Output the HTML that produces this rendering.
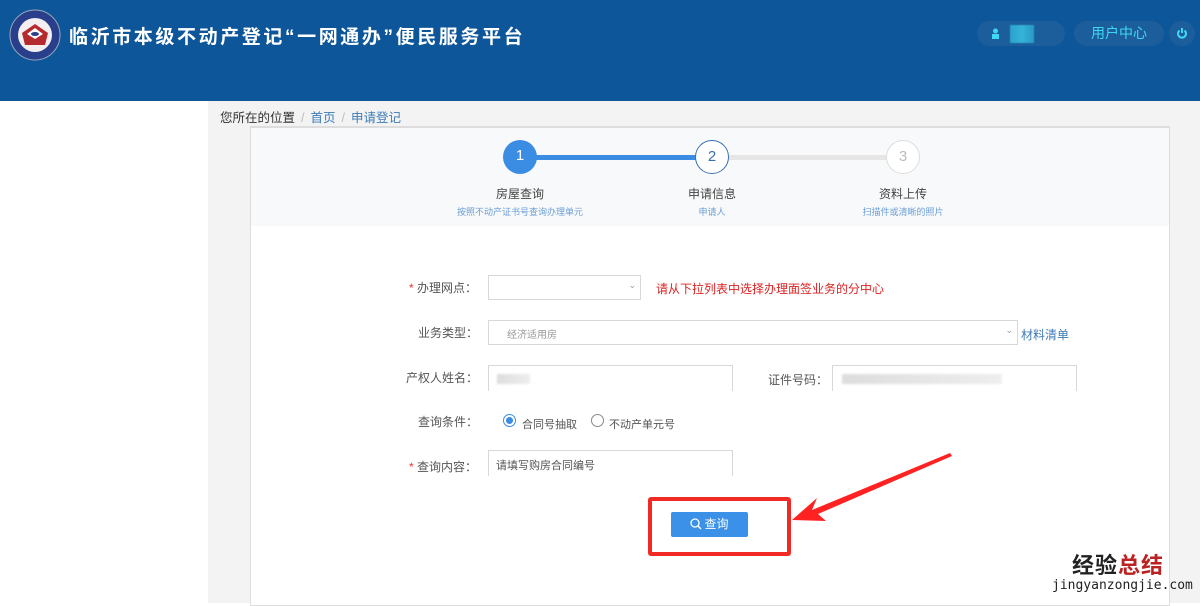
<!DOCTYPE html>
<html><head><meta charset="utf-8"><style>
*{margin:0;padding:0;box-sizing:border-box}
body{width:1200px;height:603px;overflow:hidden;background:#fff;font-family:"Liberation Sans","Noto Sans CJK SC",sans-serif;position:relative;font-size:12px;color:#555}
.hd{position:absolute;left:0;top:0;width:1200px;height:101px;background:#0d5699}
.title{position:absolute;left:69px;top:22px;color:#fff;font-size:19px;font-weight:bold;letter-spacing:2.6px}
.pill{position:absolute;top:21px;height:25px;border-radius:13px;background:#1c5e9c;color:#3fd8f0}
.gray{position:absolute;left:208px;top:101px;width:992px;height:502px;background:#f3f3f3}
.bc{position:absolute;left:220px;top:107px;font-size:12.5px;color:#333}
.bc a{color:#3e7bb6}.bc i{color:#bbb;font-style:normal;margin:0 6px}
.card{position:absolute;left:250px;top:126px;width:920px;height:480px;background:#fff;border:1px solid #ddd;border-top:2px solid #ddd}
.steps{position:absolute;left:0;top:0;width:918px;height:98px;background:#f8f9fa}
.c{position:absolute;width:34px;height:34px;border-radius:50%;text-align:center;line-height:32px;font-size:15px}
.lbl{position:absolute;text-align:center;width:200px;font-size:12px;color:#444}
.sub{position:absolute;text-align:center;width:200px;font-size:9px;color:#6a9ed6}
.f{position:absolute;font-size:12px;color:#555}
.f b{color:#e33;font-weight:normal}
.in{position:absolute;border:1px solid #d8d8d8;background:#fff;height:25px}
.blur{position:absolute;background:linear-gradient(90deg,#ddd,#eee);height:10px;filter:blur(1px)}
</style></head><body>
<div class="hd">
<svg style="position:absolute;left:8px;top:9px" width="54" height="52" viewBox="0 0 54 52"><circle cx="27" cy="26" r="25" fill="#2a3f8c" stroke="#9ab" stroke-width="1"/><circle cx="27" cy="26" r="17" fill="#f3eef0"/><path d="M14 24 L27 15 L40 24 L37 36 L17 36Z" fill="#b52a2e"/><path d="M19 25 L27 19 L35 25 L27 30Z" fill="#fff"/><ellipse cx="27" cy="25" rx="4" ry="2" fill="#2a3f8c"/></svg>
<div class="title">临沂市本级不动产登记“一网通办”便民服务平台</div>
<div class="pill" style="left:977px;width:88px"><svg style="position:absolute;left:14px;top:7px" width="9" height="11"><circle cx="4.5" cy="3" r="2.5" fill="#3fd8f0"/><rect x="1" y="6" width="7" height="5" fill="#3fd8f0"/></svg><div style="position:absolute;left:33px;top:4px;width:24px;height:18px;background:linear-gradient(90deg,#2aa3cc,#35b3d8,#2b98c6);filter:blur(0.5px)"></div></div>
<div class="pill" style="left:1074px;width:90px;font-size:14px;line-height:25px;text-align:center">用户中心</div>
<div class="pill" style="left:1169px;width:26px"><svg style="position:absolute;left:7px;top:6px" width="12" height="12"><path d="M3.5 3.5 A4 4 0 1 0 8.5 3.5" stroke="#3fd8f0" stroke-width="2" fill="none"/><line x1="6" y1="1" x2="6" y2="6" stroke="#3fd8f0" stroke-width="2"/></svg></div>
</div>
<div class="gray"></div>
<div class="bc">您所在的位置<i>/</i><a>首页</a><i>/</i><a>申请登记</a></div>
<div class="card">
<div class="steps">
<div style="position:absolute;left:270px;top:27px;width:190px;height:5px;background:#3b8de3"></div>
<div style="position:absolute;left:460px;top:27px;width:190px;height:5px;background:#e6e6e6"></div>
<div class="c" style="left:252px;top:12px;background:#3b8de3;color:#fff">1</div>
<div class="c" style="left:444px;top:12px;background:#fff;border:1px solid #3b6fb0;color:#3b6fb0">2</div>
<div class="c" style="left:635px;top:12px;background:#fff;border:1px solid #ddd;color:#bbb">3</div>
<div class="lbl" style="left:169px;top:57px">房屋查询</div><div class="sub" style="left:169px;top:77px">按照不动产证书号查询办理单元</div>
<div class="lbl" style="left:361px;top:57px">申请信息</div><div class="sub" style="left:361px;top:77px">申请人</div>
<div class="lbl" style="left:552px;top:57px">资料上传</div><div class="sub" style="left:552px;top:77px">扫描件或清晰的照片</div>
</div>
</div>
<div class="f" style="left:409px;top:279px"><b>*</b> 办理网点：</div>
<div class="in" style="left:488px;top:275px;width:153px"><span style="position:absolute;right:4px;top:4px;font-size:9px;color:#999">⌄</span></div>
<div class="f" style="left:656px;top:280px;color:#d22">请从下拉列表中选择办理面签业务的分中心</div>
<div class="f" style="left:418px;top:324px">业务类型：</div>
<div class="in" style="left:488px;top:320px;width:530px"><span style="position:absolute;left:18px;top:5px;font-size:10px;color:#999">经济适用房</span><span style="position:absolute;right:4px;top:4px;font-size:9px;color:#999">⌄</span></div>
<div class="f" style="left:1021px;top:326px;color:#3e7bb6">材料清单</div>
<div class="f" style="left:406px;top:369px">产权人姓名：</div>
<div style="position:absolute;left:488px;top:365px;width:245px;height:26px;border:1px solid #d8d8d8;border-bottom:none"></div>
<div class="blur" style="left:497px;top:374px;width:33px"></div>
<div class="f" style="left:768px;top:371px">证件号码：</div>
<div style="position:absolute;left:832px;top:365px;width:245px;height:26px;border:1px solid #d8d8d8;border-bottom:none"></div>
<div class="blur" style="left:842px;top:374px;width:160px"></div>
<div class="f" style="left:418px;top:413px">查询条件：</div>
<div style="position:absolute;left:503px;top:414px;width:13px;height:13px;border-radius:50%;border:1px solid #3b8de3"><div style="margin:2px;width:7px;height:7px;border-radius:50%;background:#3b8de3"></div></div>
<div class="f" style="left:522px;top:416px;font-size:11px">合同号抽取</div>
<div style="position:absolute;left:591px;top:414px;width:13px;height:13px;border-radius:50%;border:1px solid #888"></div>
<div class="f" style="left:609px;top:416px;font-size:11px">不动产单元号</div>
<div class="f" style="left:409px;top:458px"><b>*</b> 查询内容：</div>
<div style="position:absolute;left:488px;top:450px;width:245px;height:26px;border:1px solid #d8d8d8;border-bottom:none"></div>
<div class="f" style="left:496px;top:457px;font-size:11px">请填写购房合同编号</div>
<div style="position:absolute;left:648px;top:497px;width:143px;height:59px;border:4px solid #f02a24;border-radius:3px"></div>
<div style="position:absolute;left:671px;top:512px;width:77px;height:25px;background:#3b90e8;border-radius:2px;color:#fff;font-size:12px;line-height:25px;text-align:center"><svg width="12" height="12" style="vertical-align:-2px;margin-right:2px"><circle cx="5" cy="5" r="4" stroke="#fff" stroke-width="1.3" fill="none"/><line x1="8" y1="8" x2="11" y2="11" stroke="#fff" stroke-width="1.5"/></svg>查询</div>
<svg style="position:absolute;left:790px;top:450px" width="170" height="80"><path d="M160 3 L22 60 L27 48 L2 70 L36 71 L28 64 L162 6Z" fill="#f22"/></svg>
<div style="position:absolute;left:1072px;top:548px;font-size:22px;font-weight:bold;letter-spacing:1px"><span style="color:#222">经验</span><span style="color:#b22">总结</span></div>
<div style="position:absolute;left:1052px;top:578px;font-family:'DejaVu Sans Mono',monospace;font-size:13px;color:#222">jingyanzongjie.com</div>
</body></html>
